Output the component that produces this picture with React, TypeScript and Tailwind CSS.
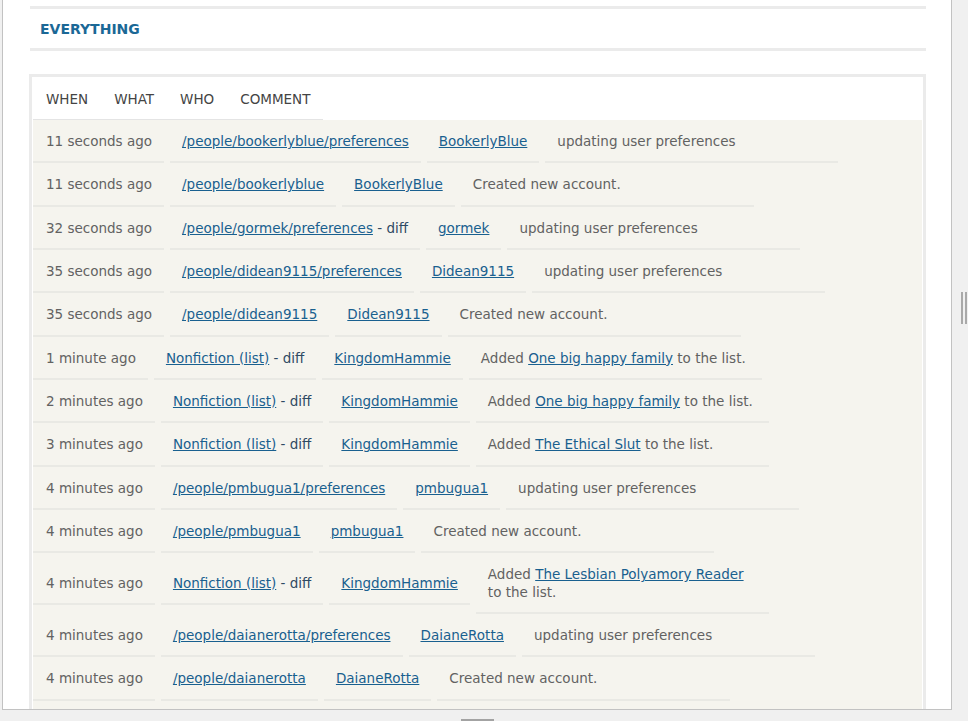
import React from 'react';

type Part = { text: string; link?: boolean; diff?: boolean };

interface Change {
    when: string;
    what: Part[];
    who: string;
    comment: Part[];
}

const listAdd = (when: string, book: string): Change => ({
    when,
    what: [{ text: 'Nonfiction (list)', link: true }, { text: ' - diff', diff: true }],
    who: 'KingdomHammie',
    comment: [{ text: 'Added ' }, { text: book, link: true }, { text: ' to the list.' }],
});

const account = (when: string, path: string, who: string): Change => ({
    when,
    what: [{ text: `/people/${path}`, link: true }],
    who,
    comment: [{ text: 'Created new account.' }],
});

const pref = (when: string, path: string, who: string, diff = false): Change => ({
    when,
    what: diff
        ? [{ text: `/people/${path}/preferences`, link: true }, { text: ' - diff', diff: true }]
        : [{ text: `/people/${path}/preferences`, link: true }],
    who,
    comment: [{ text: 'updating user preferences' }],
});

const changes: Change[] = [
    pref('11 seconds ago', 'bookerlyblue', 'BookerlyBlue'),
    account('11 seconds ago', 'bookerlyblue', 'BookerlyBlue'),
    pref('32 seconds ago', 'gormek', 'gormek', true),
    pref('35 seconds ago', 'didean9115', 'Didean9115'),
    account('35 seconds ago', 'didean9115', 'Didean9115'),
    listAdd('1 minute ago', 'One big happy family'),
    listAdd('2 minutes ago', 'One big happy family'),
    listAdd('3 minutes ago', 'The Ethical Slut'),
    pref('4 minutes ago', 'pmbugua1', 'pmbugua1'),
    account('4 minutes ago', 'pmbugua1', 'pmbugua1'),
    listAdd('4 minutes ago', 'The Lesbian Polyamory Reader'),
    pref('4 minutes ago', 'daianerotta', 'DaianeRotta'),
    account('4 minutes ago', 'daianerotta', 'DaianeRotta'),
];

const renderParts = (parts: Part[]) =>
    parts.map((p, i) =>
        p.link ? (
            <a key={i} href="#" className="text-[#19608f] underline">
                {p.text}
            </a>
        ) : p.diff ? (
            <span key={i} className="text-[#2f4a63]">{p.text}</span>
        ) : (
            <span key={i}>{p.text}</span>
        )
    );

const cell = 'px-3 pt-[13px] pb-[11px] leading-[17.33px] border-b-2 border-[#e9e9e4] whitespace-nowrap';

const HeaderCell = ({ label }: { label: string }) => (
    <div className="px-[13px] pt-[13px] pb-[11px] leading-[17px]">{label}</div>
);

export default function App() {
    return (
        <div className="relative w-[968px] h-[721px] overflow-hidden bg-[#f0f0f0] font-['DejaVu_Sans',Verdana,sans-serif] text-[13.5px]">
            <div className="ml-[2px] w-[950px] h-[710px] overflow-hidden bg-white border-l border-r border-b border-[#c2c2c2]">
                <div className="pt-[6px]">
                    {/* section title */}
                    <div className="ml-[27px] w-[896px] h-[45px] flex items-center pl-[10px] pt-px border-t-[3px] border-b-[3px] border-[#ebebeb]">
                        <h2 className="text-[14px] font-bold text-[#1b6896]">EVERYTHING</h2>
                    </div>

                    {/* recent changes table */}
                    <div className="mt-[23px] ml-[26px] w-[897px] border-[3px] border-[#ebebeb] p-px">
                        <div className="flex w-fit text-[#444] border-b border-[#e4e4e4]">
                            <HeaderCell label="WHEN" />
                            <HeaderCell label="WHAT" />
                            <HeaderCell label="WHO" />
                            <HeaderCell label="COMMENT" />
                        </div>
                        <div className="bg-[#f5f4ee] text-[#626262]">
                            {changes.map((c, i) => (
                                <div key={i} className="flex items-center gap-[6px]">
                                    <div className={`${cell} pl-[13px]`}>{c.when}</div>
                                    <div className={cell}>{renderParts(c.what)}</div>
                                    <div className={cell}>
                                        <a href="#" className="text-[#19608f] underline">{c.who}</a>
                                    </div>
                                    <div className="w-[293px] px-3 pt-[13px] pb-[11px] leading-[17.33px] border-b-2 border-[#e9e9e4]">
                                        {renderParts(c.comment)}
                                    </div>
                                </div>
                            ))}
                            {/* next row, scrolled out of view */}
                            <div className="h-[24px]" />
                        </div>
                    </div>
                </div>
            </div>

            {/* window resize grip and scroll handle */}
            <div className="absolute left-[961px] top-[292px] flex gap-[2px]">
                <div className="w-[2px] h-[32px] bg-[#a9a9a9]" />
                <div className="w-[2px] h-[32px] bg-[#a9a9a9]" />
            </div>
            <div className="absolute left-[461px] top-[719px] w-[33px] h-[2px] bg-[#a3a3a3]" />
        </div>
    );
}
